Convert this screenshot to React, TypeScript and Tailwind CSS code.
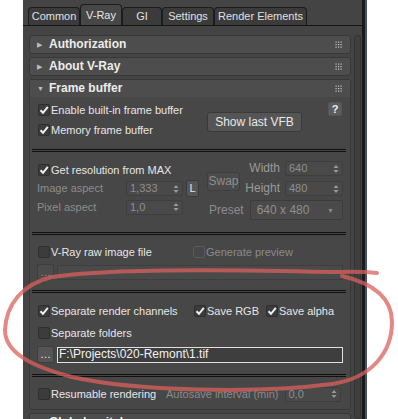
import React from "react";

const font = { fontFamily: '"Liberation Sans", Arial, sans-serif' };

function Check({ on, disabled }: { on?: boolean; disabled?: boolean }) {
  return (
    <span
      className={
        "flex h-[12px] w-[12px] shrink-0 items-center justify-center rounded-[2px] border " +
        (disabled ? "border-[#5a5a5a] bg-[#474747]" : "border-[#2e2e2e] bg-[#3c3c3c]")
      }
    >
      {on && (
        <svg width="10" height="10" viewBox="0 0 10 10">
          <path d="M1.5 5.2 L4 7.8 L8.8 1.8" fill="none" stroke="#f0f0f0" strokeWidth="2" />
        </svg>
      )}
    </span>
  );
}

function CheckRow({ label, on, disabled, className = "" }: { label: string; on?: boolean; disabled?: boolean; className?: string }) {
  return (
    <div className={"flex shrink-0 items-center gap-[1px] " + className}>
      <Check on={on} disabled={disabled} />
      <span className={disabled ? "text-[#8a8a8a]" : "text-[#e6e6e6]"}>{label}</span>
    </div>
  );
}

function Spinner({ value, w }: { value: string; w: string }) {
  return (
    <div className={"flex h-[15px] items-center justify-between rounded-[2px] border border-[#3e3e3e] bg-[#494949] pl-[3px] pr-[3px] text-[#8e8e8e] " + w}>
      <span>{value}</span>
      <svg width="6" height="10" viewBox="0 0 6 10">
        <path d="M0.5 4 L3 1 L5.5 4 Z M0.5 6 L3 9 L5.5 6 Z" fill="#9a9a9a" />
      </svg>
    </div>
  );
}

function Sep({ className = "" }: { className?: string }) {
  return (
    <div className={"ml-[1px] mr-[4px] flex shrink-0 flex-col gap-[1px] " + className}>
      <div className="h-px bg-[#111]" />
      <div className="h-px bg-[#111]" />
    </div>
  );
}

function Grip() {
  return (
    <svg width="7" height="7" viewBox="0 0 7 7">
      {[0.5, 3, 5.5].map((y) =>
        [0.5, 3, 5.5].map((x) => <rect key={x + "-" + y} x={x} y={y} width="1.2" height="1.2" fill="#c8c8c8" />)
      )}
    </svg>
  );
}

function Header({ title, open }: { title: string; open?: boolean }) {
  return (
    <div className="flex h-[17px] shrink-0 items-center pl-[7px] pr-[8px]">
      <span className="w-[12px] text-[7px] text-[#bdbdbd]">{open ? "▼" : "▶"}</span>
      <span className="flex-1 text-[12px] font-bold text-[#ececec]">{title}</span>
      <Grip />
    </div>
  );
}

function Tab({ label, w, active }: { label: string; w: string; active?: boolean }) {
  return (
    <div
      className={
        "flex items-center justify-center rounded-t-[4px] border border-b-0 border-[#1c1c1c] " +
        w +
        (active ? " h-[21px] bg-[#474747] text-[#e8e8e8]" : " h-[18px] bg-[#3b3b3b] text-[#e0e0e0]")
      }
    >
      {label}
    </div>
  );
}

export default function App() {
  return (
    <div className="relative flex h-[419px] w-[398px] overflow-hidden bg-white text-[11px] leading-[13px]" style={font}>
      <div className="w-[23px] shrink-0" />
      <div className="flex w-[339px] shrink-0 flex-col overflow-hidden bg-[#444444]">
        {/* tabs */}
        <div className="flex h-[26px] shrink-0 items-end border-b border-[#141414] pl-[5px]">
          <Tab label="Common" w="w-[52px]" />
          <Tab label="V-Ray" w="w-[42px]" active />
          <Tab label="GI" w="w-[40px]" />
          <Tab label="Settings" w="w-[52px]" />
          <Tab label="Render Elements" w="w-[93px]" />
        </div>
        <div className="flex min-h-0 flex-1 gap-[3px] overflow-hidden pl-[6px] pt-[9px]">
          <div className="flex w-[322px] shrink-0 flex-col gap-[3px]">
            <div className="shrink-0 rounded-[3px] border border-[#383838] bg-[#4d4d4d]">
              <Header title="Authorization" />
            </div>
            <div className="shrink-0 rounded-[3px] border border-[#383838] bg-[#4d4d4d]">
              <Header title="About V-Ray" />
            </div>
            <div className="flex h-[331px] shrink-0 flex-col rounded-[3px] border border-[#383838] bg-[#474747]">
              <div className="bg-[#4d4d4d]">
                <Header title="Frame buffer" open />
              </div>
              <div className="flex flex-col pl-[1px] pt-[5px]">
                {/* frame buffer top */}
                <div className="flex h-[36px] shrink-0 pl-[7px] pr-[8px]">
                  <div className="flex flex-1 flex-col gap-[4px]">
                    <CheckRow label="Enable built-in frame buffer" on className="h-[16px]" />
                    <CheckRow label="Memory frame buffer" on className="h-[16px]" />
                  </div>
                  <div className="flex flex-col items-end">
                    <div className="flex h-[14px] w-[14px] items-center justify-center rounded-[2px] border border-[#555] bg-[#5c5c5c] text-[11px] font-bold text-[#eee]">?</div>
                    <div className="mr-[40px] -mt-[4px] flex h-[20px] w-[95px] items-center justify-center rounded-[3px] border border-[#3a3a3a] bg-[#555555] text-[12px] text-[#e8e8e8]">
                      Show last VFB
                    </div>
                  </div>
                </div>
                <Sep className="mt-[11px]" />
                {/* resolution */}
                <div className="mt-[9px] flex h-[59px] shrink-0 pl-[7px]">
                  <div className="flex w-[169px] flex-col">
                    <CheckRow label="Get resolution from MAX" on className="h-[18px]" />
                    <div className="flex h-[19px] items-center">
                      <span className="w-[89px] -ml-[1px] text-[#8c8c8c]">Image aspect</span>
                      <Spinner value="1,333" w="w-[57px]" />
                      <div className="ml-[3px] flex h-[17px] w-[13px] items-center justify-center rounded-[2px] border border-[#3a3a3a] bg-[#555] text-[#e8e8e8]">L</div>
                    </div>
                    <div className="flex h-[18px] items-center">
                      <span className="w-[89px] -ml-[1px] text-[#8c8c8c]">Pixel aspect</span>
                      <Spinner value="1,0" w="w-[57px]" />
                    </div>
                  </div>
                  <div className="flex w-[136px] flex-col">
                    <div className="flex">
                      <div className="mt-[11px] flex h-[19px] w-[33px] items-center justify-center rounded-[3px] border border-[#3e3e3e] bg-[#4b4b4b] text-[12px] text-[#8e8e8e]">Swap</div>
                      <div className="flex flex-1 flex-col gap-[5px]">
                        <div className="flex items-center justify-end gap-[5px]">
                          <span className="text-[12px] text-[#9a9a9a]">Width</span>
                          <Spinner value="640" w="w-[58px]" />
                        </div>
                        <div className="flex items-center justify-end gap-[5px]">
                          <span className="text-[12px] text-[#9a9a9a]">Height</span>
                          <Spinner value="480" w="w-[58px]" />
                        </div>
                      </div>
                    </div>
                    <div className="mt-[4px] flex items-center gap-[6px] pl-[2px]">
                      <span className="text-[12px] text-[#8c8c8c]">Preset</span>
                      <div className="flex h-[20px] w-[95px] items-center justify-between rounded-[2px] border border-[#3c3c3c] bg-[#4a4a4a] pl-[6px] pr-[8px] text-[12px] text-[#8e8e8e]">
                        <span>640 x 480</span>
                        <span className="text-[7px] text-[#8a8a8a]">▼</span>
                      </div>
                    </div>
                  </div>
                </div>
                <Sep className="mt-[12px]" />
                {/* raw */}
                <div className="mt-[9px] flex h-[16px] shrink-0 items-center pl-[7px]">
                  <CheckRow label="V-Ray raw image file" className="w-[155px]" />
                  <CheckRow label="Generate preview" disabled />
                </div>
                <div className="mt-[4px] flex shrink-0 items-center gap-[3px] pl-[6px] pr-[7px]">
                  <div className="flex h-[16px] w-[17px] items-center justify-center rounded-[2px] border border-[#3e3e3e] bg-[#4b4b4b] text-[#8a8a8a]">…</div>
                  <div className="h-[15px] flex-1 border border-[#3e3e3e] bg-[#4a4a4a]" />
                </div>
                <Sep className="mt-[10px]" />
                {/* render channels */}
                <div className="mt-[10px] flex h-[16px] shrink-0 items-center pl-[7px]">
                  <CheckRow label="Separate render channels" on className="w-[156px]" />
                  <CheckRow label="Save RGB" on className="w-[72px]" />
                  <CheckRow label="Save alpha" on />
                </div>
                <div className="mt-[6px] flex h-[16px] shrink-0 items-center pl-[7px]">
                  <CheckRow label="Separate folders" />
                </div>
                <div className="mt-[5px] flex shrink-0 items-center gap-[3px] pl-[6px] pr-[7px]">
                  <div className="flex h-[17px] w-[17px] items-center justify-center rounded-[2px] border border-[#3e3e3e] bg-[#555] text-[#e6e6e6]">…</div>
                  <div className="flex h-[16px] flex-1 items-center border border-[#e0e0e0] bg-[#3e3e3e] pl-[1px] text-[12px] text-[#f2f2f2]">
                    F:\Projects\020-Remont\1.tif
                  </div>
                </div>
                <Sep className="mt-[11px]" />
                <div className="mt-[9px] flex h-[16px] shrink-0 items-center pl-[7px]">
                  <CheckRow label="Resumable rendering" className="w-[128px]" />
                  <span className="text-[#8a8a8a]">Autosave interval (min)</span>
                  <div className="ml-[6px]">
                    <Spinner value="0,0" w="w-[56px]" />
                  </div>
                </div>
              </div>
            </div>
            <div className="shrink-0 rounded-[3px] border border-[#383838] bg-[#4d4d4d]">
              <Header title="Global switches" open />
            </div>
          </div>
          {/* scrollbar */}
          <div className="w-[7px] shrink-0 rounded-[3px] border border-[#333] bg-[#3e3e3e]" />
        </div>
      </div>
      <div className="w-[3px] shrink-0 bg-[#1a1a1a]" />
      <div className="w-[2px] shrink-0 bg-[#4a4f6a]" />

      {/* red hand-drawn ellipse annotation */}
      <svg className="pointer-events-none absolute inset-0" width="398" height="419" viewBox="0 0 398 419">
        <path
          d="M377 273 C360 271 345 272 330 272 C250 270 110 268 52 277 C22 284 6 305 5 330 C5 352 30 366 72 377 C135 391 255 394 332 384 C372 378 392 352 392 322 C392 297 372 283 342 276"
          fill="none"
          stroke="#d9605c"
          strokeOpacity="0.75"
          strokeWidth="4"
          strokeLinecap="round"
        />
      </svg>
    </div>
  );
}
